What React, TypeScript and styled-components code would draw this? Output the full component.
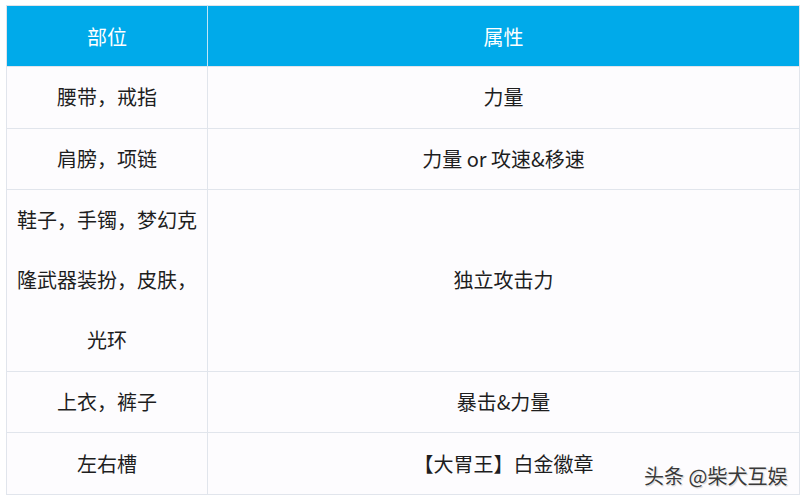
import React from "react";
import styled, { createGlobalStyle } from "styled-components";

const GlobalStyle = createGlobalStyle`
  html, body {
    margin: 0;
    padding: 0;
    background: #ffffff;
  }
  body {
    font-family: "Noto Sans CJK SC", "Noto Sans", sans-serif;
  }
`;

interface Row {
  part: string;
  attr: string;
  lines?: number;
}

const rows: Row[] = [
  { part: "腰带，戒指", attr: "力量" },
  { part: "肩膀，项链", attr: "力量 or 攻速&移速" },
  { part: "鞋子，手镯，梦幻克隆武器装扮，皮肤，光环", attr: "独立攻击力", lines: 3 },
  { part: "上衣，裤子", attr: "暴击&力量" },
  { part: "左右槽", attr: "【大胃王】白金徽章" },
];

export default function App() {
  return (
    <>
      <GlobalStyle />
      <Page>
        <Table>
          <colgroup>
            <col style={{ width: 201 }} />
            <col />
          </colgroup>
          <thead>
            <tr>
              <HeadCell>部位</HeadCell>
              <HeadCell>属性</HeadCell>
            </tr>
          </thead>
          <tbody>
            {rows.map((r) => (
              <tr key={r.part}>
                <Cell $lines={r.lines ?? 1}>{r.part}</Cell>
                <Cell $lines={r.lines ?? 1}>{r.attr}</Cell>
              </tr>
            ))}
          </tbody>
        </Table>
        <Watermark>头条 @柴犬互娱</Watermark>
      </Page>
    </>
  );
}

const Page = styled.div`
  position: relative;
  width: 805px;
  height: 500px;
  padding: 5px 5px 0 6px;
  box-sizing: border-box;
`;

const Table = styled.table`
  width: 794px;
  border-collapse: collapse;
  table-layout: fixed;
  border: 1px solid #dfe3ea;
`;

const HeadCell = styled.th`
  height: 60px;
  padding: 0;
  background: #00aaea;
  color: #ffffff;
  font-size: 20px;
  font-weight: 400;
  text-align: center;
  vertical-align: middle;
  border-left: 1px solid #bfe6f7;
  &:first-child {
    border-left: none;
  }
`;

const Cell = styled.td<{ $lines: number }>`
  height: ${(p) => p.$lines * 60 + 0.6}px;
  padding: 0 8px;
  background: #fdfcfe;
  color: #1e1e1e;
  font-size: 20px;
  line-height: 60px;
  text-align: center;
  vertical-align: middle;
  border: 1px solid #e1e5ec;
  word-break: break-all;
`;

const Watermark = styled.div`
  position: absolute;
  left: 644px;
  top: 462px;
  font-size: 20px;
  line-height: 28px;
  color: #3a3a3a;
  white-space: nowrap;
  text-shadow: 0 0 2px #ffffff, 0 0 2px #ffffff, 1px 1px 1px rgba(0, 0, 0, 0.25);
`;
